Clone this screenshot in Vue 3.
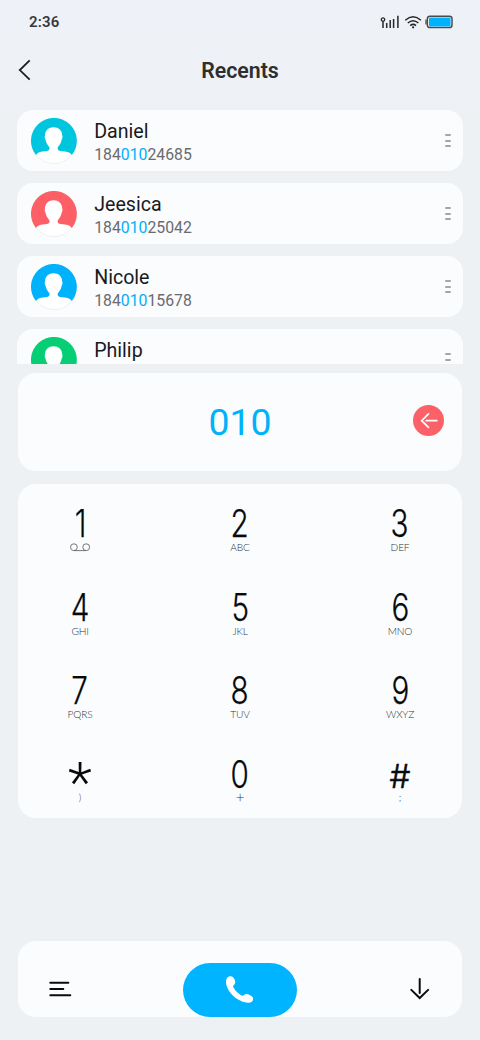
<script setup>
const contacts = [
  { name: 'Daniel', tail: '24685', tint: 'cyan' },
  { name: 'Jeesica', tail: '25042', tint: 'coral' },
  { name: 'Nicole', tail: '15678', tint: 'blue' },
  { name: 'Philip', tint: 'green' },
]
const keys = [
  { d: '1', icon: true },
  { d: '2', s: 'ABC' },
  { d: '3', s: 'DEF' },
  { d: '4', s: 'GHI' },
  { d: '5', s: 'JKL' },
  { d: '6', s: 'MNO' },
  { d: '7', s: 'PQRS' },
  { d: '8', s: 'TUV' },
  { d: '9', s: 'WXYZ' },
  { d: '*', s: ')', kind: 'star' },
  { d: '0', s: '+', kind: 'zero' },
  { d: '#', s: ';', kind: 'hash' },
]
</script>

<template>
  <main class="screen">
    <div class="status">
      <span class="time">2:36</span>
      <svg class="status-icons" width="76" height="18" viewBox="0 0 76 18">
        <g fill="none" stroke="#25272b" stroke-width="1.5">
          <circle cx="4" cy="5.6" r="1.7" stroke-width="1.3" />
          <path d="M4 7.400v6.600M7.700 9v5M11.200 6v8M14.600 5v9M18.900 1.800v12.200" />
          <path d="M26.300 6.200q7.800-7 15.600 0M28.800 9q5.300-4.600 10.600 0M31.200 11.600q2.900-2.400 5.800 0" />
        </g>
        <circle cx="34.1" cy="13.3" r="1.1" fill="#25272b" />
        <rect x="48.4" y="2.2" width="24.6" height="11.4" rx="2.6" fill="#fff" stroke="#494b4d" stroke-width="1.5" />
        <path d="M47 5.500v5" stroke="#494b4d" stroke-width="1.3" />
        <rect x="50" y="3.4" width="21.6" height="9" rx="1" fill="#00b2fc" />
      </svg>
    </div>

    <header class="header">
      <svg class="back" width="16" height="24" viewBox="0 0 16 24" fill="none" stroke="#1c1d20" stroke-width="1.8">
        <path d="M12.700 2.400 2.800 12.100l9.900 9.600" />
      </svg>
      <h1>Recents</h1>
    </header>

    <section class="list">
      <article v-for="c in contacts" :key="c.name" class="contact">
        <svg class="avatar" :class="c.tint" width="46" height="46" viewBox="0 0 46 46">
          <circle cx="23" cy="23" r="22.6" fill="#fff" stroke="#dfe8ed" stroke-width=".6" />
          <path class="tint" d="M4.900 37A22.900 22.900 0 1 1 40.900 37C38.500 34 35 33.300 31.500 33.300 28 33.300 26.600 32.400 26.600 30.300 26.600 28.800 28.200 27.600 29.400 25.400 30.100 24 30.500 22.700 30.700 21.400 31.600 20.200 31.700 18.800 31.200 17.400 31.200 12.400 27.600 9.200 22.600 9.200S14 12.400 14 17.400C13.500 18.800 13.600 20.200 14.500 21.400 14.700 22.700 15.100 24 15.800 25.400 17 27.600 18.600 28.800 18.600 30.300 18.600 32.400 17.200 33.300 13.800 33.300 10.300 33.300 7.300 34 4.900 37Z" />
        </svg>
        <div class="who">
          <div class="name">{{ c.name }}</div>
          <div class="number"><template v-if="c.tail">184<b>010</b>{{ c.tail }}</template></div>
        </div>
        <div class="more"><i></i><i></i><i></i></div>
      </article>
    </section>

    <section class="entry">
      <span class="typed">010</span>
      <button class="erase" aria-label="Delete">
        <svg width="31" height="31" viewBox="0 0 31 31" fill="none" stroke="#fff" stroke-width="1.7" stroke-linecap="round">
          <path d="M15.500 8.900 8.700 15.700l6.800 6.700M13.200 15.700h10.600" />
        </svg>
      </button>
    </section>

    <section class="keypad">
      <div v-for="k in keys" :key="k.d" class="key" :class="k.kind">
        <span class="digit">{{ k.d }}</span>
        <svg v-if="k.icon" class="voicemail" width="20" height="9" viewBox="0 0 20 9" fill="none" stroke="#66686b" stroke-width=".9">
          <circle cx="3.900" cy="4.200" r="3.400" />
          <circle cx="16.200" cy="4.200" r="3.400" />
          <path d="M4 7.600h12" />
        </svg>
        <span v-else class="sub">{{ k.s }}</span>
      </div>
    </section>

    <footer class="bar">
      <svg width="24" height="18" viewBox="0 0 24 18" fill="none" stroke="#0b0c0d" stroke-width="2" stroke-linecap="round">
        <path d="M2.300 2.700h18M2.300 8.900h13M2.300 15.200h20" />
      </svg>
      <button class="call" aria-label="Call">
        <svg width="30" height="30" viewBox="0 0 30 30" fill="#fff">
          <path d="M4.600 1.300C6.500.7 8.700 2 9.600 4.400 10.600 7 10.500 8.700 8.900 9.900 7.900 10.700 8 11.500 8.600 12.800c2 3.400 4.700 6 8 7.600 1.100.5 1.700.4 2.500-.3 1.400-1.300 3-1.300 5.500-.2 2.800 1.200 4 2.700 3.400 4.800-.5 2-2.300 3.200-5 3C12.500 27.200 1.200 16.700 1 6.800.9 3.800 2.300 1.900 4.600 1.300Z" />
        </svg>
      </button>
      <svg width="20" height="24" viewBox="0 0 20 24" fill="none" stroke="#0b0c0d" stroke-width="2" stroke-linecap="round">
        <path d="M9.700 2v14M1.300 12.900 9.700 21l8.400-8.100" />
      </svg>
    </footer>
  </main>
</template>

<style>
body { background: #edf1f4; }
</style>

<style scoped>
.screen {
  box-sizing: border-box;
  width: 480px;
  height: 1040px;
  overflow: hidden;
  display: flex;
  flex-direction: column;
  background: linear-gradient(#eef1f7 0, #eef1f6 90px, #edf1f4 130px);
  font-family: Roboto, "Liberation Sans", sans-serif;
}
button { border: 0; padding: 0; }
.status {
  height: 44px;
  display: flex;
  align-items: center;
  justify-content: space-between;
  padding: 0 25px 0 29px;
}
.time { font-size: 15px; font-weight: 600; color: #36383d; letter-spacing: .15px; }
.status-icons { margin-top: 1px; }
.header {
  height: 66px;
  display: grid;
  grid-template-columns: 40px 1fr 40px;
  align-items: start;
}
.back { margin: 14px 0 0 17px; }
h1 {
  margin: 14px 0 0;
  text-align: center;
  font-size: 21.3px;
  line-height: 25px;
  font-weight: 600;
  color: #2c2e30;
}
.list {
  height: 253.5px;
  overflow: hidden;
  display: flex;
  flex-direction: column;
  gap: 11.6px;
  margin: 0 17px;
}
.contact {
  box-sizing: border-box;
  flex: none;
  height: 61.4px;
  display: flex;
  align-items: center;
  padding: 0 12px 0 14px;
  background: #fbfcfe;
  border-radius: 16px;
}
.avatar { margin-top: .4px; }
.avatar .tint { fill: currentColor; }
.cyan { color: #00c5df; }
.coral { color: #fc6066; }
.blue { color: #00b1fc; }
.green { color: #06ce75; }
.who { flex: 1; margin-left: 17.2px; }
.name { font-size: 19.6px; line-height: 24px; margin-top: 4px; color: #191a1c; }
.number { height: 20px; font-size: 15.8px; line-height: 20px; margin-top: 1px; color: #696b6e; }
.number b { font-weight: 400; color: #00b0fa; }
.more { display: flex; flex-direction: column; gap: 3.5px; }
.more i { width: 6px; height: 2.2px; border-radius: 1px; background: #a5a6a8; }
.entry {
  height: 98px;
  margin: 9.5px 18px 0;
  display: grid;
  grid-template-columns: 1fr auto 1fr;
  align-items: center;
  background: #fbfcfe;
  border-radius: 18px;
}
.typed { grid-column: 2; font-size: 37.4px; line-height: 44px; color: #00b2fa; }
.erase {
  justify-self: end;
  width: 31px;
  height: 31px;
  margin: 0 18.5px 3px 0;
  border-radius: 50%;
  background: #fc6168;
}
.erase svg { display: block; }
.keypad {
  box-sizing: border-box;
  height: 334px;
  margin: 13px 18px 0;
  padding-top: 20px;
  display: grid;
  grid-template-columns: repeat(3, 160px);
  grid-auto-rows: 83.5px;
  align-content: start;
  justify-content: center;
  background: #fbfcfe;
  border-radius: 18px;
}
.key { display: flex; flex-direction: column; align-items: center; }
.digit {
  height: 38px;
  font-family: Inter, Roboto, sans-serif;
  font-size: 38px;
  line-height: 38px;
  font-weight: 300;
  color: #08090a;
  -webkit-text-stroke: .25px #08090a;
  transform: scaleX(.78);
}
.voicemail { margin-top: 1px; }
.sub {
  margin-top: -1px;
  font-family: Lato, Roboto, sans-serif;
  font-size: 10.2px;
  line-height: 12px;
  font-weight: 300;
  letter-spacing: -.2px;
  color: #303235;
}
.star .digit { font-family: Roboto, sans-serif; font-size: 56px; line-height: 57px; transform: none; -webkit-text-stroke: 0; }
.star .sub { font-size: 9.5px; margin-top: -1px; }
.zero .sub { font-size: 15px; margin-top: -2px; }
.hash .digit { font-size: 33px; line-height: 43px; transform: none; -webkit-text-stroke-width: .6px; }
.hash .sub { margin-top: -2px; }
.bar {
  box-sizing: border-box;
  height: 76px;
  margin: 123px 18px 0;
  padding: 0 31px;
  display: grid;
  grid-template-columns: 1fr auto 1fr;
  align-items: end;
  background: #fbfcfe;
  border-radius: 18px;
}
.bar > svg { margin: 0 0 19px -1px; }
.bar > svg:last-child { justify-self: end; margin: 0 1px 16px 0; }
.call {
  width: 114px;
  height: 54px;
  display: flex;
  align-items: center;
  justify-content: center;
  border-radius: 27px;
  background: #00b4ff;
}
</style>
